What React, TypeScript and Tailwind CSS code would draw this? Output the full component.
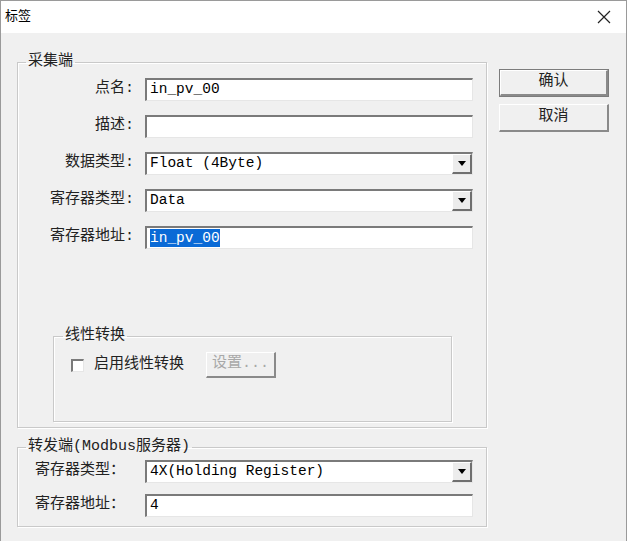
const font = "font-['Liberation_Mono','Noto_Sans_CJK_SC',monospace]";

function TextBox({ value, selected }: { value?: string; selected?: boolean }) {
  return (
    <div className="flex h-[23px] w-[328px] items-center border-t-2 border-l-2 border-b border-r border-t-[#7a7a7a] border-l-[#7a7a7a] border-b-[#e6e6e6] border-r-[#e6e6e6] bg-white pl-[3px] text-[14.5px] text-black">
      {selected ? <span className="bg-[#0a6ad6] text-white leading-[18px]">{value}</span> : value}
    </div>
  );
}

function Combo({ value }: { value: string }) {
  return (
    <div className="flex h-[23px] w-[328px] items-center border-t-2 border-l-2 border-b border-r border-t-[#7a7a7a] border-l-[#7a7a7a] border-b-[#e6e6e6] border-r-[#e6e6e6] bg-white pl-[3px] text-[14.5px] text-black">
      <span className="flex-1">{value}</span>
      <div className="flex h-full w-[20px] items-center justify-center border-t border-l border-b-2 border-r-2 border-t-white border-l-white border-b-[#6f6f6f] border-r-[#6f6f6f] bg-[#ececec]">
        <svg width="8" height="5" viewBox="0 0 8 5">
          <path d="M0 0h8L4 5z" fill="#000" />
        </svg>
      </div>
    </div>
  );
}

function Row({ label, children }: { label: string; children: React.ReactNode }) {
  return (
    <div className="flex items-center">
      <div className="w-[117px] pr-[1px] text-right text-[15px] text-[#222]">{label}</div>
      <div className="ml-[10px]">{children}</div>
    </div>
  );
}

function Row2({ label, children }: { label: string; children: React.ReactNode }) {
  return (
    <div className="flex items-center">
      <div className="w-[127px] pl-[17px] text-[15px] text-[#222]">{label}</div>
      {children}
    </div>
  );
}

function Button({ label, primary }: { label: string; primary?: boolean }) {
  return (
    <div className={primary ? "border border-[#7c7c7c]" : ""}>
      <div
        className={
          "flex items-center justify-center border-t border-l border-b-2 border-r-2 border-t-white border-l-white border-b-[#8a8a8a] border-r-[#8a8a8a] bg-[#f0f0f0] text-[15px] text-[#222] " +
          (primary ? "h-[26px] w-[108px]" : "h-[28px] w-[110px]")
        }
      >
        {label}
      </div>
    </div>
  );
}

export default function App() {
  return (
    <div className={`h-[541px] w-[627px] overflow-hidden border-t border-l border-r border-[#9a9a9a] bg-[#f0f0f0] ${font}`}>
      {/* Title bar */}
      <div className="flex h-[32px] items-center justify-between bg-white pl-[4px] pr-[15px]">
        <span className="text-[13px] text-black">标签</span>
        <svg width="14" height="14" viewBox="0 0 14 14">
          <path d="M1 1l12 12M13 1L1 13" stroke="#222" strokeWidth="1.2" />
        </svg>
      </div>

      <div className="flex items-start pl-[16px]">
        {/* Left column */}
        <div className="mt-[19px] w-[470px]">
          <fieldset className="border border-[#c9c9c9] shadow-[inset_1px_1px_0_#fff,1px_1px_0_#fff]">
            <legend className="ml-[8px] px-[2px] text-[15px] leading-[20px] text-[#222]">采集端</legend>
            <div className="flex flex-col gap-[14px] pt-[6px]">
              <Row label="点名:">
                <TextBox value="in_pv_00" />
              </Row>
              <Row label="描述:">
                <TextBox />
              </Row>
              <Row label="数据类型:">
                <Combo value="Float (4Byte)" />
              </Row>
              <Row label="寄存器类型:">
                <Combo value="Data" />
              </Row>
              <Row label="寄存器地址:">
                <TextBox value="in_pv_00" selected />
              </Row>
            </div>

            <fieldset className="mt-[77px] mb-[5px] ml-[35px] h-[96px] w-[399px] border border-[#c9c9c9] shadow-[inset_1px_1px_0_#fff,1px_1px_0_#fff]">
              <legend className="ml-[9px] px-[2px] text-[15px] leading-[20px] text-[#222]">线性转换</legend>
              <div className="flex items-center pt-[6px] pl-[17px]">
                <div className="h-[13px] w-[13px] border-t-2 border-l-2 border-b border-r border-t-[#7a7a7a] border-l-[#7a7a7a] border-b-[#e6e6e6] border-r-[#e6e6e6] bg-white" />
                <span className="ml-[10px] text-[15px] text-[#222]">启用线性转换</span>
                <div className="ml-[22px] flex h-[26px] w-[70px] items-center justify-center border-t border-l border-b-2 border-r-2 border-t-white border-l-white border-b-[#8a8a8a] border-r-[#8a8a8a] text-[15px] text-[#a8a8a8]">
                  设置...
                </div>
              </div>
            </fieldset>
          </fieldset>

          <fieldset className="mt-[9px] border border-[#c9c9c9] shadow-[inset_1px_1px_0_#fff,1px_1px_0_#fff]">
            <legend className="ml-[8px] px-[2px] text-[15px] leading-[20px] text-[#222]">转发端(Modbus服务器)</legend>
            <div className="flex flex-col gap-[11px] pt-[3px] pb-[9px]">
              <Row2 label="寄存器类型：">
                <Combo value="4X(Holding Register)" />
              </Row2>
              <Row2 label="寄存器地址：">
                <TextBox value="4" />
              </Row2>
            </div>
          </fieldset>
        </div>

        {/* Right column */}
        <div className="ml-[12px] mt-[36px] flex flex-col gap-[7px]">
          <Button label="确认" primary />
          <Button label="取消" />
        </div>
      </div>
    </div>
  );
}
